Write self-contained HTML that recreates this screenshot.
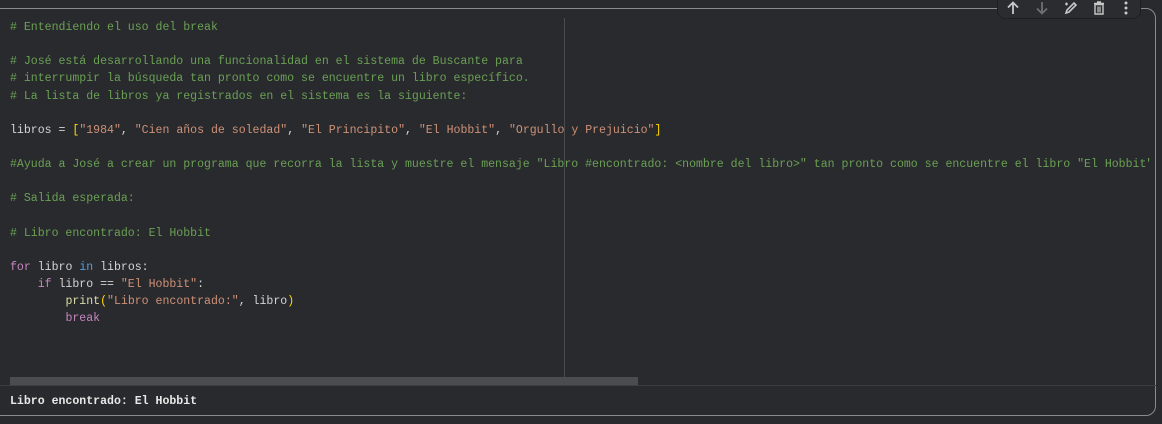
<!DOCTYPE html>
<html><head><meta charset="utf-8"><style>
html,body{margin:0;padding:0;background:#292a2d;width:1162px;height:424px;overflow:hidden;position:relative}
.cell{position:absolute;left:-10px;top:8px;width:1166px;height:408px;border:1px solid #8a8b8e;border-radius:0 10px 10px 0;box-sizing:border-box}
.code{position:absolute;left:10px;top:19px;width:1140px;height:358px;overflow:hidden;font-family:"Liberation Mono",monospace;font-size:11.55px;line-height:17.12px;color:#d4d4d4;white-space:pre}
.c{color:#6aa055}.s{color:#ce9178}.k{color:#c586c0}.b{color:#569cd6}.f{color:#dcdcaa}.y{color:#ffd700}
.ruler{position:absolute;left:564px;top:18px;width:1px;height:368px;background:#4a4b4e}
.sb{position:absolute;left:10px;top:377px;width:628px;height:9px;background:#4b4c4f}
.sep{position:absolute;left:0;top:385px;width:1156px;height:1px;background:#3c3d40}
.out{position:absolute;left:10px;top:395px;font-family:"Liberation Mono",monospace;font-size:11.55px;color:#e8e8e8;font-weight:bold}
.tb{position:absolute;left:997px;top:-6px;width:144px;height:25px;background:#2b2c2f;border:1px solid #1e1f21;border-radius:0 0 8px 8px;box-sizing:border-box}
.tb svg{position:absolute;top:6px}
</style></head><body>
<div class="cell"></div>
<div class="ruler"></div>
<div class="code"><span class="c"># Entendiendo el uso del break</span>

<span class="c"># José está desarrollando una funcionalidad en el sistema de Buscante para</span>
<span class="c"># interrumpir la búsqueda tan pronto como se encuentre un libro específico.</span>
<span class="c"># La lista de libros ya registrados en el sistema es la siguiente:</span>

libros = <span class="y">[</span><span class="s">"1984"</span>, <span class="s">"Cien años de soledad"</span>, <span class="s">"El Principito"</span>, <span class="s">"El Hobbit"</span>, <span class="s">"Orgullo y Prejuicio"</span><span class="y">]</span>

<span class="c">#Ayuda a José a crear un programa que recorra la lista y muestre el mensaje "Libro #encontrado: &lt;nombre del libro&gt;" tan pronto como se encuentre el libro "El Hobbit".</span>

<span class="c"># Salida esperada:</span>

<span class="c"># Libro encontrado: El Hobbit</span>

<span class="k">for</span> libro <span class="b">in</span> libros:
    <span class="k">if</span> libro == <span class="s">"El Hobbit"</span>:
        <span class="f">print</span><span class="y">(</span><span class="s">"Libro encontrado:"</span>, libro<span class="y">)</span>
        <span class="k">break</span></div>
<div class="sb"></div>
<div class="sep"></div>
<div class="out">Libro encontrado: El Hobbit</div>
<div class="tb">
<svg style="left:9px" width="12" height="14" viewBox="0 0 12 14"><path d="M6 13V2M1 6.5L6 1.5 11 6.5" stroke="#c8c8c8" stroke-width="1.8" fill="none"/></svg>
<svg style="left:38px" width="12" height="14" viewBox="0 0 12 14"><path d="M6 1V12M1 7.5L6 12.5 11 7.5" stroke="#6e6f72" stroke-width="1.8" fill="none"/></svg>
<svg style="left:66px" width="14" height="14" viewBox="0 0 14 14"><path d="M2 12L3 9 10 2 12 4 5 11Z" stroke="#c8c8c8" stroke-width="1.6" fill="none"/><path d="M1 3h3M2.5 1.5v3" stroke="#c8c8c8" stroke-width="1.2"/></svg>
<svg style="left:95px" width="12" height="14" viewBox="0 0 12 14"><path d="M1 2.5h10M4 1h4M2 3.5h8v9.5H2z" stroke="#c8c8c8" stroke-width="1.4" fill="none"/><path d="M5 5.5v6M7 5.5v6" stroke="#c8c8c8" stroke-width="1.2"/></svg>
<svg style="left:126px" width="4" height="14" viewBox="0 0 4 14"><circle cx="2" cy="2" r="1.5" fill="#c8c8c8"/><circle cx="2" cy="7" r="1.5" fill="#c8c8c8"/><circle cx="2" cy="12" r="1.5" fill="#c8c8c8"/></svg>
</div>
</body></html>
